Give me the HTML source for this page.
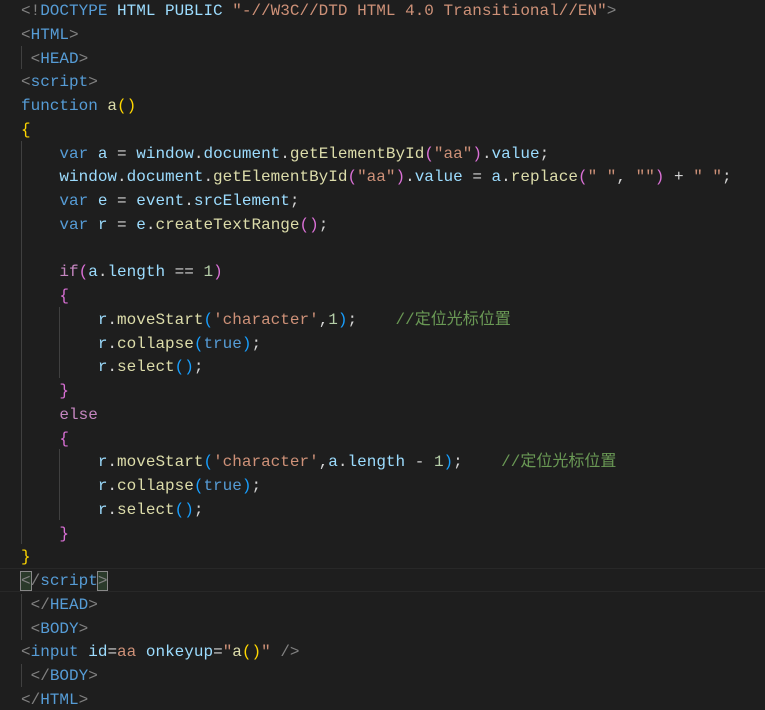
<!DOCTYPE html>
<html><head><meta charset="utf-8">
<style>
html,body{margin:0;padding:0;background:#1e1e1e;width:765px;height:710px;overflow:hidden}
#c{position:relative;font-family:"Liberation Mono","Noto Sans CJK SC",monospace;font-size:16px;color:#d4d4d4}
.l{position:absolute;left:21px;height:23.75px;line-height:23.75px;white-space:pre;margin-top:2px}
.g{position:absolute;width:1px;background:#404040}
.t{color:#808080}.n{color:#569cd6}.at{color:#9cdcfe}.s{color:#ce9178}.k{color:#569cd6}
.f{color:#dcdcaa}.v{color:#9cdcfe}.c{color:#6a9955}.num{color:#b5cea8}.kw{color:#c586c0}
.y{color:#ffd700}.p{color:#da70d6}.b{color:#179fff}
.cur{position:absolute;left:0;width:765px;height:22px;border-top:1px solid #282828;border-bottom:1px solid #282828}
.bx{outline:1px solid #888;background:#2a3a2a}
</style></head><body><div id="c">
<div class="cur" style="top:568px"></div>
<div class="g" style="left:21px;top:46px;height:23px"></div>
<div class="g" style="left:21px;top:141px;height:403px"></div>
<div class="g" style="left:59px;top:307px;height:71px"></div>
<div class="g" style="left:59px;top:449px;height:71px"></div>
<div class="g" style="left:21px;top:594px;height:46px"></div>
<div class="g" style="left:21px;top:664px;height:23px"></div>
<div class="l" style="top:-2px"><span class="t">&lt;!</span><span class="n">DOCTYPE</span> <span class="at">HTML</span> <span class="at">PUBLIC</span> <span class="s">"-//W3C//DTD HTML 4.0 Transitional//EN"</span><span class="t">&gt;</span></div>
<div class="l" style="top:21.75px"><span class="t">&lt;</span><span class="n">HTML</span><span class="t">&gt;</span></div>
<div class="l" style="top:45.5px"> <span class="t">&lt;</span><span class="n">HEAD</span><span class="t">&gt;</span></div>
<div class="l" style="top:69.25px"><span class="t">&lt;</span><span class="n">script</span><span class="t">&gt;</span></div>
<div class="l" style="top:93px"><span class="k">function</span> <span class="f">a</span><span class="y">()</span></div>
<div class="l" style="top:116.75px"><span class="y">{</span></div>
<div class="l" style="top:140.5px">    <span class="k">var</span> <span class="v">a</span> = <span class="v">window</span>.<span class="v">document</span>.<span class="f">getElementById</span><span class="p">(</span><span class="s">"aa"</span><span class="p">)</span>.<span class="v">value</span>;</div>
<div class="l" style="top:164.25px">    <span class="v">window</span>.<span class="v">document</span>.<span class="f">getElementById</span><span class="p">(</span><span class="s">"aa"</span><span class="p">)</span>.<span class="v">value</span> = <span class="v">a</span>.<span class="f">replace</span><span class="p">(</span><span class="s">" "</span>, <span class="s">""</span><span class="p">)</span> + <span class="s">" "</span>;</div>
<div class="l" style="top:188px">    <span class="k">var</span> <span class="v">e</span> = <span class="v">event</span>.<span class="v">srcElement</span>;</div>
<div class="l" style="top:211.75px">    <span class="k">var</span> <span class="v">r</span> = <span class="v">e</span>.<span class="f">createTextRange</span><span class="p">()</span>;</div>
<div class="l" style="top:259.25px">    <span class="kw">if</span><span class="p">(</span><span class="v">a</span>.<span class="v">length</span> == <span class="num">1</span><span class="p">)</span></div>
<div class="l" style="top:283px">    <span class="p">{</span></div>
<div class="l" style="top:306.75px">        <span class="v">r</span>.<span class="f">moveStart</span><span class="b">(</span><span class="s">'character'</span>,<span class="num">1</span><span class="b">)</span>;    <span class="c">//定位光标位置</span></div>
<div class="l" style="top:330.5px">        <span class="v">r</span>.<span class="f">collapse</span><span class="b">(</span><span class="k">true</span><span class="b">)</span>;</div>
<div class="l" style="top:354.25px">        <span class="v">r</span>.<span class="f">select</span><span class="b">()</span>;</div>
<div class="l" style="top:378px">    <span class="p">}</span></div>
<div class="l" style="top:401.75px">    <span class="kw">else</span></div>
<div class="l" style="top:425.5px">    <span class="p">{</span></div>
<div class="l" style="top:449.25px">        <span class="v">r</span>.<span class="f">moveStart</span><span class="b">(</span><span class="s">'character'</span>,<span class="v">a</span>.<span class="v">length</span> - <span class="num">1</span><span class="b">)</span>;    <span class="c">//定位光标位置</span></div>
<div class="l" style="top:473px">        <span class="v">r</span>.<span class="f">collapse</span><span class="b">(</span><span class="k">true</span><span class="b">)</span>;</div>
<div class="l" style="top:496.75px">        <span class="v">r</span>.<span class="f">select</span><span class="b">()</span>;</div>
<div class="l" style="top:520.5px">    <span class="p">}</span></div>
<div class="l" style="top:544.25px"><span class="y">}</span></div>
<div class="l" style="top:568px"><span class="t bx">&lt;</span><span class="t">/</span><span class="n">script</span><span class="t bx">&gt;</span></div>
<div class="l" style="top:591.75px"> <span class="t">&lt;/</span><span class="n">HEAD</span><span class="t">&gt;</span></div>
<div class="l" style="top:615.5px"> <span class="t">&lt;</span><span class="n">BODY</span><span class="t">&gt;</span></div>
<div class="l" style="top:639.25px"><span class="t">&lt;</span><span class="n">input</span> <span class="at">id</span>=<span class="s">aa</span> <span class="at">onkeyup</span>=<span class="s">"</span><span class="f">a</span><span class="y">()</span><span class="s">"</span> <span class="t">/&gt;</span></div>
<div class="l" style="top:663px"> <span class="t">&lt;/</span><span class="n">BODY</span><span class="t">&gt;</span></div>
<div class="l" style="top:686.75px"><span class="t">&lt;/</span><span class="n">HTML</span><span class="t">&gt;</span></div>
</div></body></html>
